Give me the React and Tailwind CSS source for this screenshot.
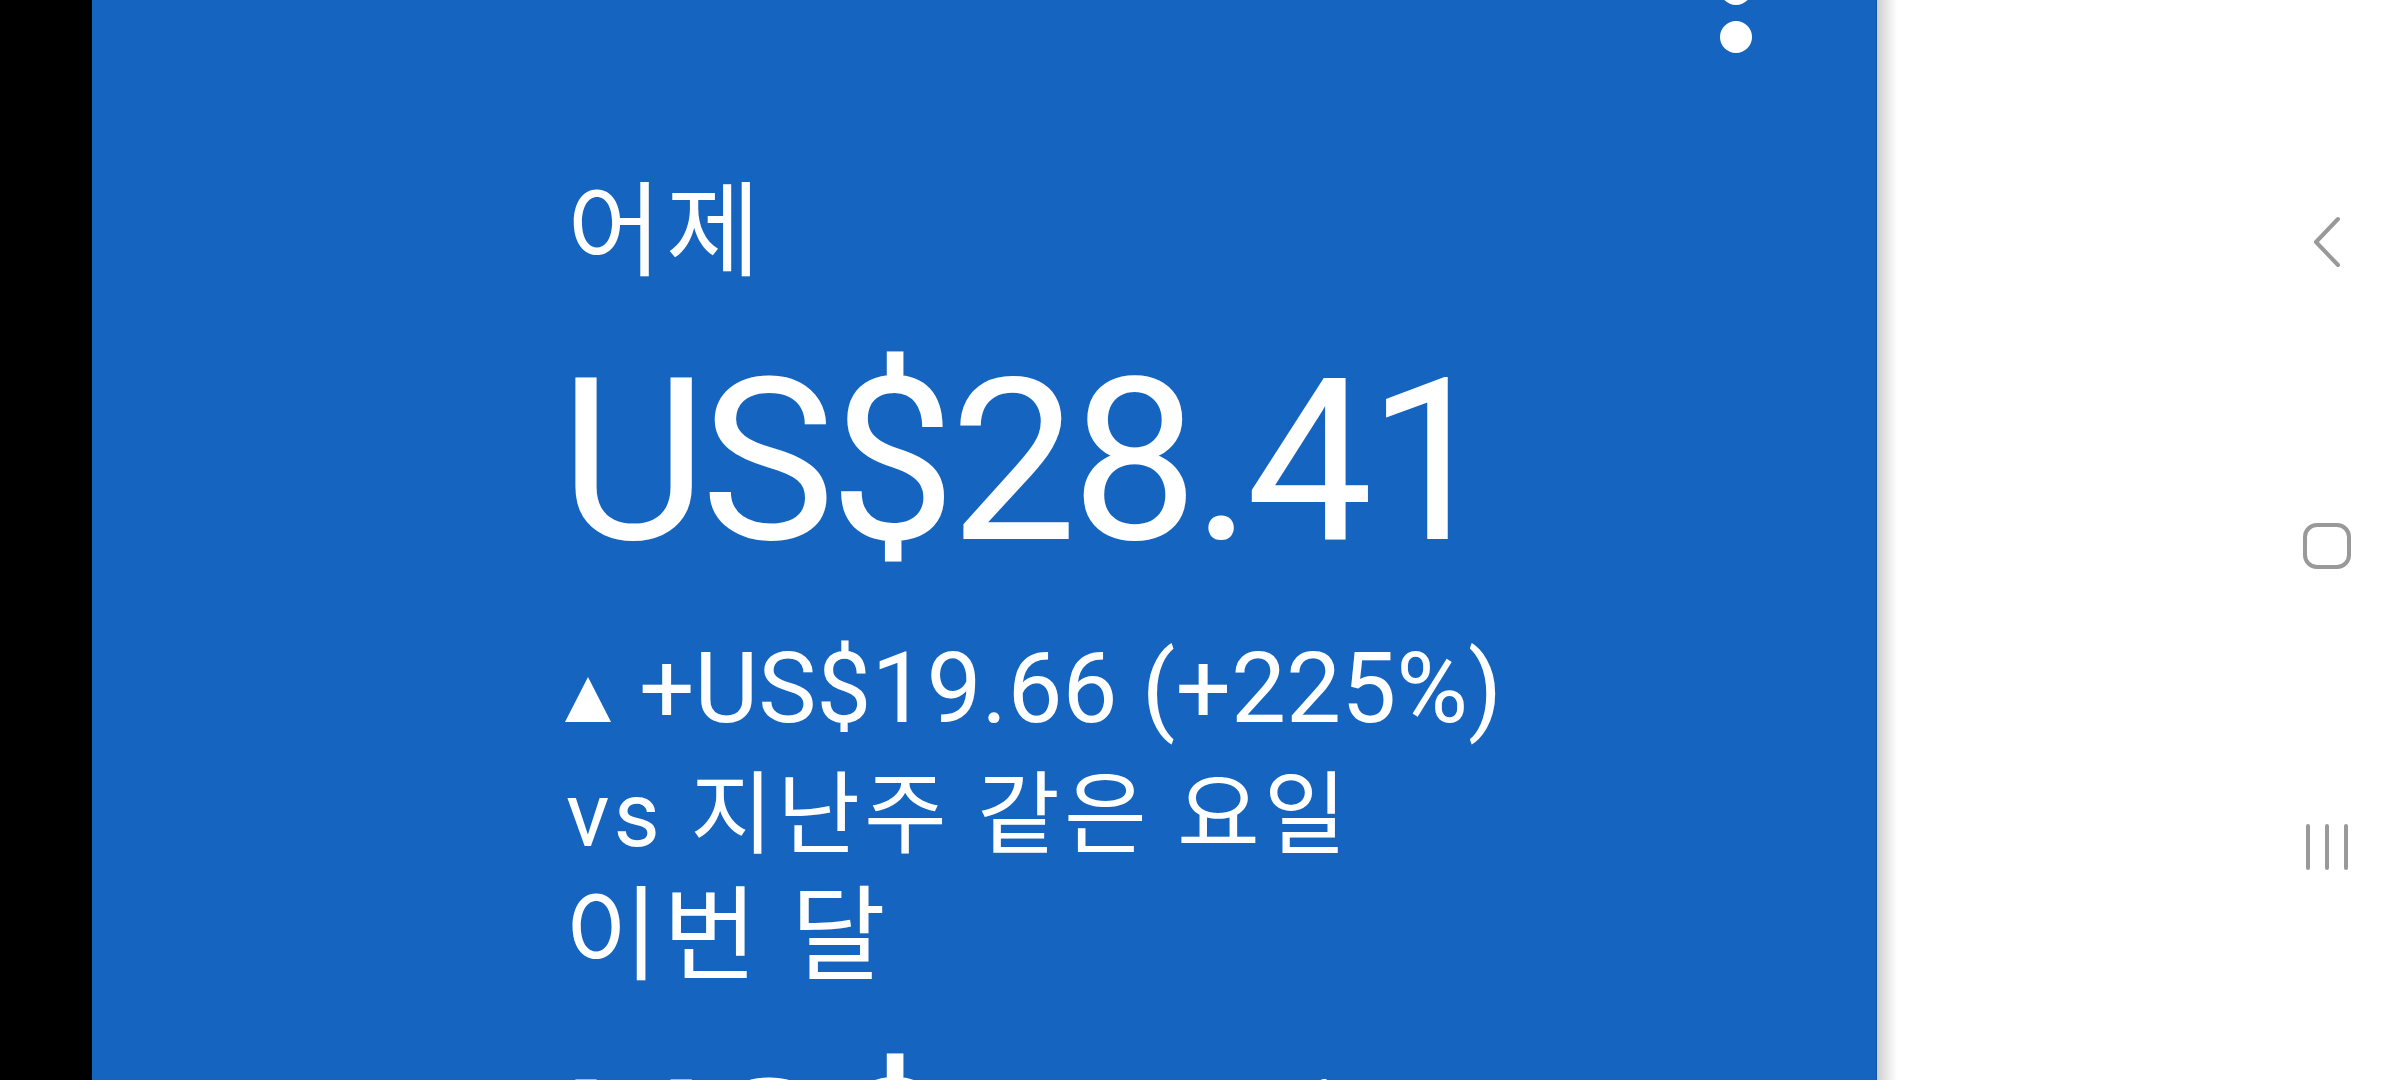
import React from 'react';

const font = { fontFamily: 'Roboto, "Noto Sans CJK KR", sans-serif' };

function NavBar() {
  return (
    <div className="flex-1 bg-white flex justify-end">
      <div className="w-[146px] flex flex-col items-center justify-between pt-[216px] pb-[209px]">
        {/* Back */}
        <svg width="30" height="52" viewBox="0 0 30 52">
          <path d="M26 3 L4 26 L26 49" fill="none" stroke="#999999" strokeWidth="4" strokeLinecap="round" strokeLinejoin="round" />
        </svg>
        {/* Home */}
        <svg width="48" height="46" viewBox="0 0 48 46">
          <rect x="2" y="2" width="44" height="42" rx="12" fill="none" stroke="#999999" strokeWidth="4" />
        </svg>
        {/* Recents */}
        <svg width="46" height="48" viewBox="0 0 46 48">
          <path d="M4 3 V45 M23 3 V45 M42 3 V45" fill="none" stroke="#999999" strokeWidth="4" strokeLinecap="round" />
        </svg>
      </div>
    </div>
  );
}

export default function App() {
  return (
    <div className="w-[2400px] h-[1080px] flex overflow-hidden bg-white" style={font}>
      <div className="w-[92px] h-full bg-black shrink-0" />

      {/* Blue card */}
      <div className="relative w-[1785px] h-full bg-[#1565c0] shrink-0 overflow-hidden border-r border-[#0f55a8]">
        {/* Overflow menu (scrolled) */}
        <div className="absolute right-[124px] top-[-75px] flex flex-col gap-[16px]">
          <span className="w-[32px] h-[32px] rounded-full bg-white" />
          <span className="w-[32px] h-[32px] rounded-full bg-white" />
          <span className="w-[32px] h-[32px] rounded-full bg-white" />
        </div>

        <div className="flex flex-col pl-[468px] pt-[173px] text-white">
          <div className="h-[120px] leading-[120px] text-[103px] ml-[7px] tracking-[4px]">어제</div>
          <div className="mt-[49px] h-[240px] leading-[240px] text-[226px] tracking-[-0.026em]">US$28.41</div>
          <div className="mt-[47px] h-[120px] flex items-center">
            <svg width="46" height="45" viewBox="0 0 46 45" className="ml-[5px] mt-[21px] shrink-0">
              <path d="M23 0 L46 45 L0 45 Z" fill="white" />
            </svg>
            <span className="ml-[28px] leading-[120px] text-[98px] whitespace-nowrap">+US$19.66 (+225%)</span>
          </div>
          <div className="mt-[12px] h-[110px] leading-[110px] text-[90px] ml-[6px] tracking-[4px] whitespace-nowrap">vs 지난주 같은 요일</div>
          <div className="mt-[6px] h-[120px] leading-[120px] text-[103px] ml-[4px] tracking-[4px]">이번 달</div>
          <div className="mt-[47px] h-[240px] leading-[240px] text-[226px] tracking-[-0.026em]">US$74.14</div>
        </div>
      </div>

      {/* Edge shadow */}
      <div className="w-[20px] h-full shrink-0 bg-gradient-to-r from-[#cfcfcf] to-white" />

      <NavBar />
    </div>
  );
}
